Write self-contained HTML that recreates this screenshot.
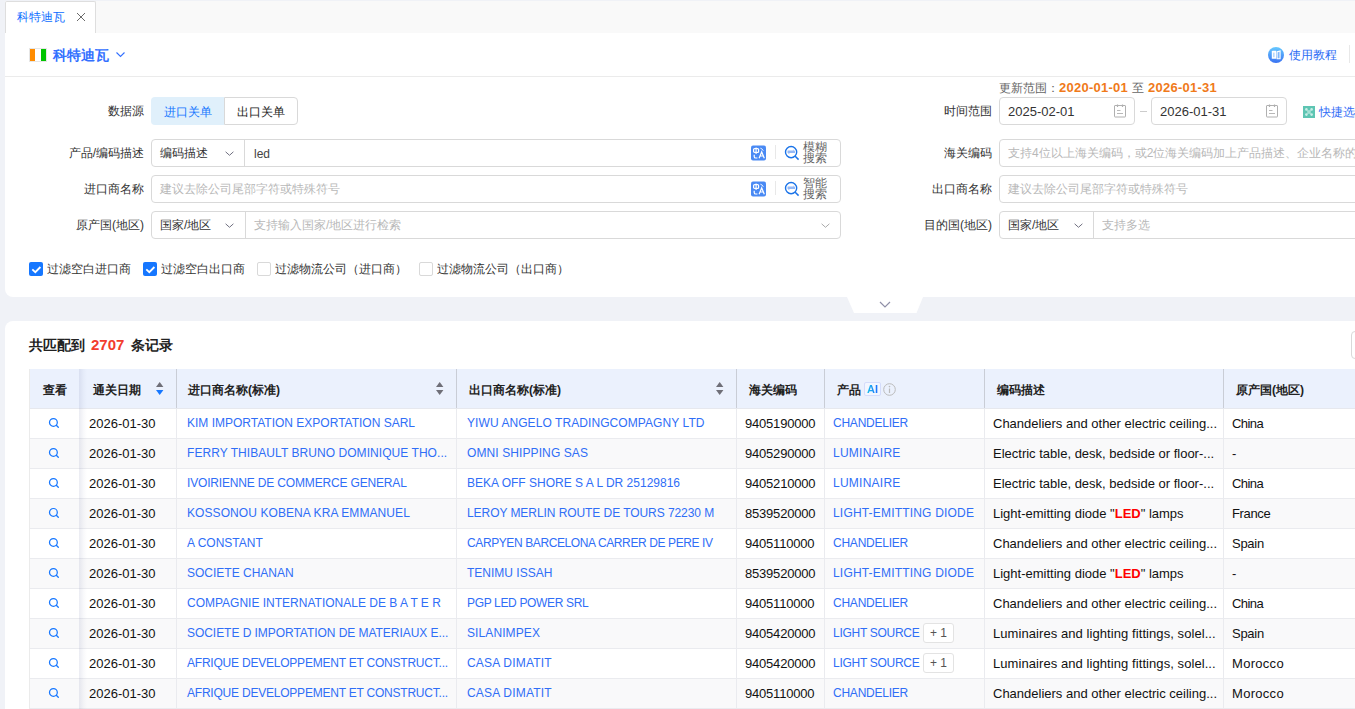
<!DOCTYPE html>
<html><head><meta charset="utf-8">
<style>
*{box-sizing:border-box;margin:0;padding:0}
html,body{width:1355px;height:709px;overflow:hidden}
body{background:#f0f2f7;font-family:"Liberation Sans",sans-serif;font-size:12px;color:#333;position:relative}
.a{position:absolute;white-space:nowrap}
.tabbar{left:5px;top:1px;width:1350px;height:32px;background:#f9f9f9}
.tab{left:5px;top:1px;width:91px;height:32px;background:#fff;border:1px solid #dedede;border-bottom:none;border-radius:2px 2px 0 0}
.p1{left:5px;top:33px;width:1350px;height:264px;background:#fff;border-bottom-left-radius:8px}
.p2{left:5px;top:321px;width:1350px;height:400px;background:#fff;border-top-left-radius:8px}
.lbl{color:#333;font-size:12px;text-align:right;line-height:28px;height:28px;width:120px}
.box{border:1px solid #d9d9d9;border-radius:4px;background:#fff;height:28px}
.ph{color:#b8b8b8;font-size:12px;line-height:16px}
.val{color:#333;font-size:12px;line-height:16px}
.chev{width:6px;height:6px;border-right:1px solid #999;border-bottom:1px solid #999;transform:rotate(45deg)}
.cb{width:14px;height:14px;border-radius:2px;background:#1677ff}
.cb.off{background:#fff;border:1px solid #d9d9d9}

.cbt{font-size:12px;color:#333;line-height:16px}
.th{font-size:12px;font-weight:bold;color:#222;line-height:16px}
.td{font-size:13px;color:#111;line-height:16px}
.lk{color:#2f6ef7;font-size:12px}
</style></head><body>
<div class="a tabbar"></div>
<div class="a tab"></div>
<div class="a" style="left:17px;top:9px;font-size:12px;color:#0a6cff;line-height:16px">科特迪瓦</div>
<svg class="a" style="left:76px;top:12px" width="10" height="10" viewBox="0 0 10 10"><path d="M1 1L9 9M9 1L1 9" stroke="#6a6a6a" stroke-width="1"/></svg>
<div class="a p1"></div>
<div class="a p2"></div>

<!-- header -->
<div class="a" style="left:5px;top:76px;width:1350px;height:1px;background:#ebebeb"></div>
<div class="a" style="left:29px;top:48px;width:18px;height:14px;border:1px solid #e6e6e6;background:linear-gradient(90deg,#ff8c00 0 33%,#fff 33% 66%,#00c400 66%)"></div>
<div class="a" style="left:53px;top:47px;font-size:14px;font-weight:bold;color:#3370ff;line-height:16px">科特迪瓦</div>
<svg class="a" style="left:116px;top:52px" width="9" height="6" viewBox="0 0 9 6"><path d="M0.5 0.5L4.5 4.5L8.5 0.5" stroke="#3370ff" stroke-width="1.1" fill="none"/></svg>
<div class="a" style="left:1268px;top:47px;width:16px;height:16px;border-radius:50%;background:linear-gradient(#66c9ff,#3a72f2)"></div><svg class="a" style="left:1268px;top:47px" width="16" height="16" viewBox="0 0 16 16"><path d="M3.8 4.6Q3.8 3.8 4.6 3.8H8.2V11.7H3.8Z" fill="#fff"/><rect x="5" y="5.6" width="1.6" height="4.6" fill="#b9dafc"/><path d="M9.1 4.9L12.1 4V11.7H9.1Z" stroke="#fff" stroke-width="1.1" fill="#7fb6fa"/></svg>
<div class="a" style="left:1289px;top:47px;font-size:12px;color:#2b6cf5;line-height:16px">使用教程</div>
<div class="a" style="left:1349px;top:45px;width:1px;height:18px;background:#e8e8e8"></div>

<!-- form row 1 -->
<div class="a lbl" style="left:24px;top:97px">数据源</div>
<div class="a" style="left:151px;top:97px;width:73px;height:28px;background:#e0f0fb;border-radius:4px 0 0 4px;color:#1677ff;text-align:center;line-height:28px;padding-top:1px">进口关单</div>
<div class="a" style="left:224px;top:97px;width:74px;height:28px;border:1px solid #d9d9d9;border-radius:0 4px 4px 0;color:#222;text-align:center;line-height:26px;padding-top:1px">出口关单</div>
<div class="a" style="left:999px;top:80px;font-size:12px;line-height:16px;color:#666">更新范围：</div><div class="a" style="left:1059px;top:80px;font-size:13px;font-weight:bold;letter-spacing:0.25px;line-height:16px;color:#f07a1a">2020-01-01</div><div class="a" style="left:1132px;top:80px;font-size:12px;line-height:16px;color:#666">至</div><div class="a" style="left:1148px;top:80px;font-size:13px;font-weight:bold;letter-spacing:0.25px;line-height:16px;color:#f07a1a">2026-01-31</div>
<div class="a lbl" style="left:872px;top:97px">时间范围</div>
<div class="a box" style="left:999px;top:97px;width:136px"></div>
<div class="a val" style="left:1008px;top:104px;font-size:13px">2025-02-01</div>
<div class="a box" style="left:1151px;top:97px;width:136px"></div>
<div class="a val" style="left:1160px;top:104px;font-size:13px">2026-01-31</div>
<div class="a" style="left:1140px;top:111px;width:7px;height:1px;background:#ccc"></div>
<svg class="a" style="left:1114px;top:104px" width="12" height="14" viewBox="0 0 12 14"><rect x="0.5" y="1.5" width="11" height="11.5" rx="0.5" stroke="#b0b0b0" stroke-width="1" fill="none"/><path d="M3.5 0.5V3M8.5 0.5V3" stroke="#b0b0b0" stroke-width="1.2"/><path d="M3 6.5H6.5M3 9.5H9" stroke="#b8b8b8" stroke-width="1"/></svg>
<svg class="a" style="left:1266px;top:104px" width="12" height="14" viewBox="0 0 12 14"><rect x="0.5" y="1.5" width="11" height="11.5" rx="0.5" stroke="#b0b0b0" stroke-width="1" fill="none"/><path d="M3.5 0.5V3M8.5 0.5V3" stroke="#b0b0b0" stroke-width="1.2"/><path d="M3 6.5H6.5M3 9.5H9" stroke="#b8b8b8" stroke-width="1"/></svg>
<svg class="a" style="left:1303px;top:106px" width="12" height="12" viewBox="0 0 12 12"><rect width="12" height="12" fill="#5ec5b3"/><path d="M4.5 4.5L7.5 7.5M7.5 4.5L4.5 7.5" stroke="#c9eee7" stroke-width="1.5"/><circle cx="3.4" cy="3.4" r="1.3" fill="#c9eee7"/><circle cx="8.6" cy="3.4" r="1.3" fill="#c9eee7"/><circle cx="3.4" cy="8.6" r="1.3" fill="#c9eee7"/><circle cx="8.6" cy="8.6" r="1.3" fill="#c9eee7"/><rect x="5" y="5" width="2" height="2" fill="#a5e0d5"/></svg>
<div class="a" style="left:1319px;top:104px;color:#2f6cf6;line-height:16px">快捷选择</div>

<!-- row 2 -->
<div class="a lbl" style="left:24px;top:139px">产品/编码描述</div>
<div class="a box" style="left:151px;top:139px;width:690px"></div>
<div class="a" style="left:244px;top:140px;width:1px;height:26px;background:#d9d9d9"></div>
<div class="a val" style="left:160px;top:145px">编码描述</div>
<svg class="a" style="left:224.5px;top:150.5px" width="9" height="6" viewBox="0 0 9 6"><path d="M0.6 0.8L4.5 4.3L8.4 0.8" stroke="#707080" stroke-width="1" fill="none"/></svg>
<div class="a val" style="left:254px;top:146px;color:#444">led</div>
<svg class="a" style="left:751px;top:145px" width="15" height="16" viewBox="0 0 15 16"><rect y="0.5" width="15" height="15" rx="2" fill="#4a8af4"/><rect x="2.6" y="3.6" width="5" height="3.8" rx="1" stroke="#fff" stroke-width="1.2" fill="none"/><path d="M5.1 2.4V9" stroke="#fff" stroke-width="1.1"/><path d="M3.2 9.8V11.4Q3.2 13 4.8 13H6.4" stroke="#fff" stroke-width="1.2" fill="none"/><path d="M8.1 13.2L10.7 6.9L13.3 13.2M9.1 11H12.3" stroke="#fff" stroke-width="1.2" fill="none"/><path d="M9.4 3.2L11.2 4.1L12.3 5.8" stroke="#fff" stroke-width="1" fill="none" opacity="0.9"/></svg>
<div class="a" style="left:775px;top:145px;width:1px;height:14px;background:#e8e8e8"></div>
<svg class="a" style="left:784px;top:145px" width="16" height="16" viewBox="0 0 16 16"><circle cx="7.1" cy="7.1" r="5.6" stroke="#1a73e8" stroke-width="1.4" fill="none"/><path d="M3.6 5.6H9.6L9.2 4.3L11 6.3V8.1H5.2L5.5 9.6L3.4 7.4Z" fill="#93b8f6"/><path d="M11.2 11.2L14.6 14.6" stroke="#1a73e8" stroke-width="1.5"/></svg>
<div class="a" style="left:803px;top:142px;font-size:12px;line-height:11px;color:#666">模糊<br>搜索</div>
<div class="a lbl" style="left:872px;top:139px">海关编码</div>
<div class="a box" style="left:999px;top:139px;width:400px"></div>
<div class="a ph" style="left:1008px;top:145px">支持4位以上海关编码，或2位海关编码加上产品描述、企业名称的组合</div>

<!-- row 3 -->
<div class="a lbl" style="left:24px;top:175px">进口商名称</div>
<div class="a box" style="left:151px;top:175px;width:690px"></div>
<div class="a ph" style="left:160px;top:181px">建议去除公司尾部字符或特殊符号</div>
<svg class="a" style="left:751px;top:181px" width="15" height="16" viewBox="0 0 15 16"><rect y="0.5" width="15" height="15" rx="2" fill="#4a8af4"/><rect x="2.6" y="3.6" width="5" height="3.8" rx="1" stroke="#fff" stroke-width="1.2" fill="none"/><path d="M5.1 2.4V9" stroke="#fff" stroke-width="1.1"/><path d="M3.2 9.8V11.4Q3.2 13 4.8 13H6.4" stroke="#fff" stroke-width="1.2" fill="none"/><path d="M8.1 13.2L10.7 6.9L13.3 13.2M9.1 11H12.3" stroke="#fff" stroke-width="1.2" fill="none"/><path d="M9.4 3.2L11.2 4.1L12.3 5.8" stroke="#fff" stroke-width="1" fill="none" opacity="0.9"/></svg>
<div class="a" style="left:775px;top:181px;width:1px;height:14px;background:#e8e8e8"></div>
<svg class="a" style="left:784px;top:181px" width="16" height="16" viewBox="0 0 16 16"><circle cx="7.1" cy="7.1" r="5.6" stroke="#1a73e8" stroke-width="1.4" fill="none"/><path d="M3.6 5.6H9.6L9.2 4.3L11 6.3V8.1H5.2L5.5 9.6L3.4 7.4Z" fill="#93b8f6"/><path d="M11.2 11.2L14.6 14.6" stroke="#1a73e8" stroke-width="1.5"/></svg>
<div class="a" style="left:803px;top:178px;font-size:12px;line-height:11px;color:#666">智能<br>搜索</div>
<div class="a lbl" style="left:872px;top:175px">出口商名称</div>
<div class="a box" style="left:999px;top:175px;width:400px"></div>
<div class="a ph" style="left:1008px;top:181px">建议去除公司尾部字符或特殊符号</div>

<!-- row 4 -->
<div class="a lbl" style="left:24px;top:211px">原产国(地区)</div>
<div class="a box" style="left:151px;top:211px;width:690px"></div>
<div class="a" style="left:245px;top:212px;width:1px;height:26px;background:#d9d9d9"></div>
<div class="a val" style="left:160px;top:217px">国家/地区</div>
<svg class="a" style="left:224.5px;top:222.5px" width="9" height="6" viewBox="0 0 9 6"><path d="M0.6 0.8L4.5 4.3L8.4 0.8" stroke="#707080" stroke-width="1" fill="none"/></svg>
<div class="a ph" style="left:254px;top:217px">支持输入国家/地区进行检索</div>
<svg class="a" style="left:820.5px;top:222.5px" width="9" height="6" viewBox="0 0 9 6"><path d="M0.6 0.8L4.5 4.3L8.4 0.8" stroke="#aaa" stroke-width="1" fill="none"/></svg>
<div class="a lbl" style="left:872px;top:211px">目的国(地区)</div>
<div class="a box" style="left:999px;top:211px;width:400px"></div>
<div class="a" style="left:1093px;top:212px;width:1px;height:26px;background:#d9d9d9"></div>
<div class="a val" style="left:1008px;top:217px">国家/地区</div>
<svg class="a" style="left:1073.5px;top:222.5px" width="9" height="6" viewBox="0 0 9 6"><path d="M0.6 0.8L4.5 4.3L8.4 0.8" stroke="#707080" stroke-width="1" fill="none"/></svg>
<div class="a ph" style="left:1102px;top:217px">支持多选</div>

<!-- checkboxes -->
<div class="a cb" style="left:29px;top:262px"><svg width="14" height="14" viewBox="0 0 14 14" style="position:absolute;left:0;top:0"><path d="M3.3 7.3L6.3 10.2L11.4 5" stroke="#fff" stroke-width="1.8" fill="none"/></svg></div><div class="a cbt" style="left:47px;top:261px">过滤空白进口商</div>
<div class="a cb" style="left:143px;top:262px"><svg width="14" height="14" viewBox="0 0 14 14" style="position:absolute;left:0;top:0"><path d="M3.3 7.3L6.3 10.2L11.4 5" stroke="#fff" stroke-width="1.8" fill="none"/></svg></div><div class="a cbt" style="left:161px;top:261px">过滤空白出口商</div>
<div class="a cb off" style="left:257px;top:262px"></div><div class="a cbt" style="left:275px;top:261px">过滤物流公司（进口商）</div>
<div class="a cb off" style="left:419px;top:262px"></div><div class="a cbt" style="left:437px;top:261px">过滤物流公司（出口商）</div>

<!-- collapse -->
<svg class="a" style="left:847px;top:297px" width="76" height="16" viewBox="0 0 76 16"><path d="M0 0H76L69.5 16H7Z" fill="#fff"/><path d="M33 5L38 10L43 5" stroke="#9090a8" stroke-width="1.2" fill="none"/></svg>

<!-- panel 2 -->
<div class="a" style="left:29px;top:336px;font-size:14px;font-weight:bold;color:#222;line-height:18px">共匹配到</div><div class="a" style="left:91px;top:336px;font-size:15px;font-weight:bold;color:#f23d2d;line-height:18px">2707</div><div class="a" style="left:131px;top:336px;font-size:14px;font-weight:bold;color:#222;line-height:18px">条记录</div>
<div class="a" style="left:1351px;top:331px;width:30px;height:28px;border:1px solid #d9d9d9;border-radius:4px"></div>
<div class="a" style="left:29px;top:369px;width:1330px;height:40px;background:#ebf1fd;border-bottom:1px solid #e6e8ee"></div>
<div class="a" style="left:176px;top:369px;width:1px;height:39px;background:#c9cdd6"></div>
<div class="a" style="left:456px;top:369px;width:1px;height:39px;background:#c9cdd6"></div>
<div class="a" style="left:736px;top:369px;width:1px;height:39px;background:#c9cdd6"></div>
<div class="a" style="left:824px;top:369px;width:1px;height:39px;background:#c9cdd6"></div>
<div class="a" style="left:984px;top:369px;width:1px;height:39px;background:#c9cdd6"></div>
<div class="a" style="left:1223px;top:369px;width:1px;height:39px;background:#c9cdd6"></div>
<div class="a th" style="left:30px;width:50px;text-align:center;top:382px">查看</div>
<div class="a th" style="left:93px;top:382px">通关日期</div>
<div class="a th" style="left:188px;top:382px">进口商名称(标准)</div>
<div class="a th" style="left:469px;top:382px">出口商名称(标准)</div>
<div class="a th" style="left:749px;top:382px">海关编码</div>
<div class="a th" style="left:837px;top:382px">产品</div>
<div class="a th" style="left:997px;top:382px">编码描述</div>
<div class="a th" style="left:1236px;top:382px">原产国(地区)</div>
<svg class="a" style="left:156px;top:381px" width="8" height="15" viewBox="0 0 8 15"><path d="M0 5.9L3.7 0.9L7.4 5.9Z" fill="#6f6f78"/><path d="M0 9L3.7 14L7.4 9Z" fill="#1677ff"/></svg>
<svg class="a" style="left:436px;top:381px" width="8" height="15" viewBox="0 0 8 15"><path d="M0 5.9L3.7 0.9L7.4 5.9Z" fill="#6f6f78"/><path d="M0 9L3.7 14L7.4 9Z" fill="#6f6f78"/></svg>
<svg class="a" style="left:716px;top:381px" width="8" height="15" viewBox="0 0 8 15"><path d="M0 5.9L3.7 0.9L7.4 5.9Z" fill="#6f6f78"/><path d="M0 9L3.7 14L7.4 9Z" fill="#6f6f78"/></svg>
<div class="a" style="left:864px;top:382px;width:17px;height:14px;border:1px solid #d4dcfb;border-radius:2px;background:#f2f6ff"></div>
<div class="a" style="left:867px;top:383px;font-size:11px;font-weight:bold;line-height:12px;background:linear-gradient(90deg,#1ec0e8,#1a6cff);-webkit-background-clip:text;background-clip:text;color:transparent">AI</div>
<svg class="a" style="left:883px;top:383px" width="13" height="13" viewBox="0 0 13 13"><circle cx="6.5" cy="6.5" r="5.8" stroke="#bbb" stroke-width="1" fill="none"/><path d="M6.5 5.5V10" stroke="#bbb" stroke-width="1.2"/><circle cx="6.5" cy="3.6" r="0.8" fill="#bbb"/></svg>
<div class="a" style="left:29px;top:409px;width:1330px;height:30px;background:#fff;border-bottom:1px solid #eaebef"></div>
<div class="a" style="left:176px;top:409px;width:1px;height:30px;background:#eaebef"></div>
<div class="a" style="left:456px;top:409px;width:1px;height:30px;background:#eaebef"></div>
<div class="a" style="left:736px;top:409px;width:1px;height:30px;background:#eaebef"></div>
<div class="a" style="left:824px;top:409px;width:1px;height:30px;background:#eaebef"></div>
<div class="a" style="left:984px;top:409px;width:1px;height:30px;background:#eaebef"></div>
<div class="a" style="left:1223px;top:409px;width:1px;height:30px;background:#eaebef"></div>
<svg class="a" style="left:48px;top:417px" width="12" height="12" viewBox="0 0 12 12"><circle cx="5.4" cy="5.4" r="3.9" stroke="#1677ff" stroke-width="1.25" fill="none"/><path d="M8.3 8.3L10.3 10.3" stroke="#1677ff" stroke-width="1.3" stroke-linecap="round"/></svg>
<div class="a td" style="left:89px;top:416px">2026-01-30</div>
<div class="a td lk" style="left:187px;top:415px">KIM IMPORTATION EXPORTATION SARL</div>
<div class="a td lk" style="left:467px;top:415px;letter-spacing:0.077px">YIWU ANGELO TRADINGCOMPAGNY LTD</div>
<div class="a td" style="left:745px;top:416px;letter-spacing:-0.2px">9405190000</div>
<div class="a td lk" style="left:833px;top:415px;letter-spacing:-0.233px">CHANDELIER</div>
<div class="a td" style="left:993px;top:416px">Chandeliers and other electric ceiling...</div>
<div class="a td" style="left:1232px;top:416px;letter-spacing:-0.575px">China</div>
<div class="a" style="left:29px;top:439px;width:1330px;height:30px;background:#f9f9fa;border-bottom:1px solid #eaebef"></div>
<div class="a" style="left:176px;top:439px;width:1px;height:30px;background:#eaebef"></div>
<div class="a" style="left:456px;top:439px;width:1px;height:30px;background:#eaebef"></div>
<div class="a" style="left:736px;top:439px;width:1px;height:30px;background:#eaebef"></div>
<div class="a" style="left:824px;top:439px;width:1px;height:30px;background:#eaebef"></div>
<div class="a" style="left:984px;top:439px;width:1px;height:30px;background:#eaebef"></div>
<div class="a" style="left:1223px;top:439px;width:1px;height:30px;background:#eaebef"></div>
<svg class="a" style="left:48px;top:447px" width="12" height="12" viewBox="0 0 12 12"><circle cx="5.4" cy="5.4" r="3.9" stroke="#1677ff" stroke-width="1.25" fill="none"/><path d="M8.3 8.3L10.3 10.3" stroke="#1677ff" stroke-width="1.3" stroke-linecap="round"/></svg>
<div class="a td" style="left:89px;top:446px">2026-01-30</div>
<div class="a td lk" style="left:187px;top:445px;letter-spacing:0.058px">FERRY THIBAULT BRUNO DOMINIQUE THO...</div>
<div class="a td lk" style="left:467px;top:445px;letter-spacing:0.1px">OMNI SHIPPING SAS</div>
<div class="a td" style="left:745px;top:446px;letter-spacing:-0.2px">9405290000</div>
<div class="a td lk" style="left:833px;top:445px;letter-spacing:0.25px">LUMINAIRE</div>
<div class="a td" style="left:993px;top:446px">Electric table, desk, bedside or floor-...</div>
<div class="a td" style="left:1232px;top:446px">-</div>
<div class="a" style="left:29px;top:469px;width:1330px;height:30px;background:#fff;border-bottom:1px solid #eaebef"></div>
<div class="a" style="left:176px;top:469px;width:1px;height:30px;background:#eaebef"></div>
<div class="a" style="left:456px;top:469px;width:1px;height:30px;background:#eaebef"></div>
<div class="a" style="left:736px;top:469px;width:1px;height:30px;background:#eaebef"></div>
<div class="a" style="left:824px;top:469px;width:1px;height:30px;background:#eaebef"></div>
<div class="a" style="left:984px;top:469px;width:1px;height:30px;background:#eaebef"></div>
<div class="a" style="left:1223px;top:469px;width:1px;height:30px;background:#eaebef"></div>
<svg class="a" style="left:48px;top:477px" width="12" height="12" viewBox="0 0 12 12"><circle cx="5.4" cy="5.4" r="3.9" stroke="#1677ff" stroke-width="1.25" fill="none"/><path d="M8.3 8.3L10.3 10.3" stroke="#1677ff" stroke-width="1.3" stroke-linecap="round"/></svg>
<div class="a td" style="left:89px;top:476px">2026-01-30</div>
<div class="a td lk" style="left:187px;top:475px;letter-spacing:-0.169px">IVOIRIENNE DE COMMERCE GENERAL</div>
<div class="a td lk" style="left:467px;top:475px">BEKA OFF SHORE S A L DR 25129816</div>
<div class="a td" style="left:745px;top:476px;letter-spacing:-0.2px">9405210000</div>
<div class="a td lk" style="left:833px;top:475px;letter-spacing:0.25px">LUMINAIRE</div>
<div class="a td" style="left:993px;top:476px">Electric table, desk, bedside or floor-...</div>
<div class="a td" style="left:1232px;top:476px;letter-spacing:-0.575px">China</div>
<div class="a" style="left:29px;top:499px;width:1330px;height:30px;background:#f9f9fa;border-bottom:1px solid #eaebef"></div>
<div class="a" style="left:176px;top:499px;width:1px;height:30px;background:#eaebef"></div>
<div class="a" style="left:456px;top:499px;width:1px;height:30px;background:#eaebef"></div>
<div class="a" style="left:736px;top:499px;width:1px;height:30px;background:#eaebef"></div>
<div class="a" style="left:824px;top:499px;width:1px;height:30px;background:#eaebef"></div>
<div class="a" style="left:984px;top:499px;width:1px;height:30px;background:#eaebef"></div>
<div class="a" style="left:1223px;top:499px;width:1px;height:30px;background:#eaebef"></div>
<svg class="a" style="left:48px;top:507px" width="12" height="12" viewBox="0 0 12 12"><circle cx="5.4" cy="5.4" r="3.9" stroke="#1677ff" stroke-width="1.25" fill="none"/><path d="M8.3 8.3L10.3 10.3" stroke="#1677ff" stroke-width="1.3" stroke-linecap="round"/></svg>
<div class="a td" style="left:89px;top:506px">2026-01-30</div>
<div class="a td lk" style="left:187px;top:505px;letter-spacing:0.078px">KOSSONOU KOBENA KRA EMMANUEL</div>
<div class="a td lk" style="left:467px;top:505px;letter-spacing:-0.065px">LEROY MERLIN ROUTE DE TOURS 72230 M</div>
<div class="a td" style="left:745px;top:506px;letter-spacing:-0.2px">8539520000</div>
<div class="a td lk" style="left:833px;top:505px;letter-spacing:0.189px">LIGHT-EMITTING DIODE</div>
<div class="a td" style="left:993px;top:506px">Light-emitting diode "<b style="color:#f00">LED</b>" lamps</div>
<div class="a td" style="left:1232px;top:506px;letter-spacing:-0.36px">France</div>
<div class="a" style="left:29px;top:529px;width:1330px;height:30px;background:#fff;border-bottom:1px solid #eaebef"></div>
<div class="a" style="left:176px;top:529px;width:1px;height:30px;background:#eaebef"></div>
<div class="a" style="left:456px;top:529px;width:1px;height:30px;background:#eaebef"></div>
<div class="a" style="left:736px;top:529px;width:1px;height:30px;background:#eaebef"></div>
<div class="a" style="left:824px;top:529px;width:1px;height:30px;background:#eaebef"></div>
<div class="a" style="left:984px;top:529px;width:1px;height:30px;background:#eaebef"></div>
<div class="a" style="left:1223px;top:529px;width:1px;height:30px;background:#eaebef"></div>
<svg class="a" style="left:48px;top:537px" width="12" height="12" viewBox="0 0 12 12"><circle cx="5.4" cy="5.4" r="3.9" stroke="#1677ff" stroke-width="1.25" fill="none"/><path d="M8.3 8.3L10.3 10.3" stroke="#1677ff" stroke-width="1.3" stroke-linecap="round"/></svg>
<div class="a td" style="left:89px;top:536px">2026-01-30</div>
<div class="a td lk" style="left:187px;top:535px">A CONSTANT</div>
<div class="a td lk" style="left:467px;top:535px;letter-spacing:-0.394px">CARPYEN BARCELONA CARRER DE PERE IV</div>
<div class="a td" style="left:745px;top:536px;letter-spacing:-0.2px">9405110000</div>
<div class="a td lk" style="left:833px;top:535px;letter-spacing:-0.233px">CHANDELIER</div>
<div class="a td" style="left:993px;top:536px">Chandeliers and other electric ceiling...</div>
<div class="a td" style="left:1232px;top:536px;letter-spacing:-0.275px">Spain</div>
<div class="a" style="left:29px;top:559px;width:1330px;height:30px;background:#f9f9fa;border-bottom:1px solid #eaebef"></div>
<div class="a" style="left:176px;top:559px;width:1px;height:30px;background:#eaebef"></div>
<div class="a" style="left:456px;top:559px;width:1px;height:30px;background:#eaebef"></div>
<div class="a" style="left:736px;top:559px;width:1px;height:30px;background:#eaebef"></div>
<div class="a" style="left:824px;top:559px;width:1px;height:30px;background:#eaebef"></div>
<div class="a" style="left:984px;top:559px;width:1px;height:30px;background:#eaebef"></div>
<div class="a" style="left:1223px;top:559px;width:1px;height:30px;background:#eaebef"></div>
<svg class="a" style="left:48px;top:567px" width="12" height="12" viewBox="0 0 12 12"><circle cx="5.4" cy="5.4" r="3.9" stroke="#1677ff" stroke-width="1.25" fill="none"/><path d="M8.3 8.3L10.3 10.3" stroke="#1677ff" stroke-width="1.3" stroke-linecap="round"/></svg>
<div class="a td" style="left:89px;top:566px">2026-01-30</div>
<div class="a td lk" style="left:187px;top:565px">SOCIETE CHANAN</div>
<div class="a td lk" style="left:467px;top:565px">TENIMU ISSAH</div>
<div class="a td" style="left:745px;top:566px;letter-spacing:-0.2px">8539520000</div>
<div class="a td lk" style="left:833px;top:565px;letter-spacing:0.189px">LIGHT-EMITTING DIODE</div>
<div class="a td" style="left:993px;top:566px">Light-emitting diode "<b style="color:#f00">LED</b>" lamps</div>
<div class="a td" style="left:1232px;top:566px">-</div>
<div class="a" style="left:29px;top:589px;width:1330px;height:30px;background:#fff;border-bottom:1px solid #eaebef"></div>
<div class="a" style="left:176px;top:589px;width:1px;height:30px;background:#eaebef"></div>
<div class="a" style="left:456px;top:589px;width:1px;height:30px;background:#eaebef"></div>
<div class="a" style="left:736px;top:589px;width:1px;height:30px;background:#eaebef"></div>
<div class="a" style="left:824px;top:589px;width:1px;height:30px;background:#eaebef"></div>
<div class="a" style="left:984px;top:589px;width:1px;height:30px;background:#eaebef"></div>
<div class="a" style="left:1223px;top:589px;width:1px;height:30px;background:#eaebef"></div>
<svg class="a" style="left:48px;top:597px" width="12" height="12" viewBox="0 0 12 12"><circle cx="5.4" cy="5.4" r="3.9" stroke="#1677ff" stroke-width="1.25" fill="none"/><path d="M8.3 8.3L10.3 10.3" stroke="#1677ff" stroke-width="1.3" stroke-linecap="round"/></svg>
<div class="a td" style="left:89px;top:596px">2026-01-30</div>
<div class="a td lk" style="left:187px;top:595px">COMPAGNIE INTERNATIONALE DE B A T E R</div>
<div class="a td lk" style="left:467px;top:595px;letter-spacing:-0.338px">PGP LED POWER SRL</div>
<div class="a td" style="left:745px;top:596px;letter-spacing:-0.2px">9405110000</div>
<div class="a td lk" style="left:833px;top:595px;letter-spacing:-0.233px">CHANDELIER</div>
<div class="a td" style="left:993px;top:596px">Chandeliers and other electric ceiling...</div>
<div class="a td" style="left:1232px;top:596px;letter-spacing:-0.575px">China</div>
<div class="a" style="left:29px;top:619px;width:1330px;height:30px;background:#f9f9fa;border-bottom:1px solid #eaebef"></div>
<div class="a" style="left:176px;top:619px;width:1px;height:30px;background:#eaebef"></div>
<div class="a" style="left:456px;top:619px;width:1px;height:30px;background:#eaebef"></div>
<div class="a" style="left:736px;top:619px;width:1px;height:30px;background:#eaebef"></div>
<div class="a" style="left:824px;top:619px;width:1px;height:30px;background:#eaebef"></div>
<div class="a" style="left:984px;top:619px;width:1px;height:30px;background:#eaebef"></div>
<div class="a" style="left:1223px;top:619px;width:1px;height:30px;background:#eaebef"></div>
<svg class="a" style="left:48px;top:627px" width="12" height="12" viewBox="0 0 12 12"><circle cx="5.4" cy="5.4" r="3.9" stroke="#1677ff" stroke-width="1.25" fill="none"/><path d="M8.3 8.3L10.3 10.3" stroke="#1677ff" stroke-width="1.3" stroke-linecap="round"/></svg>
<div class="a td" style="left:89px;top:626px">2026-01-30</div>
<div class="a td lk" style="left:187px;top:625px;letter-spacing:-0.045px">SOCIETE D IMPORTATION DE MATERIAUX E...</div>
<div class="a td lk" style="left:467px;top:625px;letter-spacing:0.1px">SILANIMPEX</div>
<div class="a td" style="left:745px;top:626px;letter-spacing:-0.2px">9405420000</div>
<div class="a td lk" style="left:833px;top:625px;letter-spacing:-0.282px">LIGHT SOURCE</div>
<div class="a" style="left:923px;top:623px;width:31px;height:20px;border:1px solid #e3e3e3;border-radius:3px;background:#fff;color:#555;font-size:12px;line-height:19px;text-align:center">+ 1</div>
<div class="a td" style="left:993px;top:626px;letter-spacing:0.073px">Luminaires and lighting fittings, solel...</div>
<div class="a td" style="left:1232px;top:626px;letter-spacing:-0.275px">Spain</div>
<div class="a" style="left:29px;top:649px;width:1330px;height:30px;background:#fff;border-bottom:1px solid #eaebef"></div>
<div class="a" style="left:176px;top:649px;width:1px;height:30px;background:#eaebef"></div>
<div class="a" style="left:456px;top:649px;width:1px;height:30px;background:#eaebef"></div>
<div class="a" style="left:736px;top:649px;width:1px;height:30px;background:#eaebef"></div>
<div class="a" style="left:824px;top:649px;width:1px;height:30px;background:#eaebef"></div>
<div class="a" style="left:984px;top:649px;width:1px;height:30px;background:#eaebef"></div>
<div class="a" style="left:1223px;top:649px;width:1px;height:30px;background:#eaebef"></div>
<svg class="a" style="left:48px;top:657px" width="12" height="12" viewBox="0 0 12 12"><circle cx="5.4" cy="5.4" r="3.9" stroke="#1677ff" stroke-width="1.25" fill="none"/><path d="M8.3 8.3L10.3 10.3" stroke="#1677ff" stroke-width="1.3" stroke-linecap="round"/></svg>
<div class="a td" style="left:89px;top:656px">2026-01-30</div>
<div class="a td lk" style="left:187px;top:655px;letter-spacing:-0.217px">AFRIQUE DEVELOPPEMENT ET CONSTRUCT...</div>
<div class="a td lk" style="left:467px;top:655px;letter-spacing:0.2px">CASA DIMATIT</div>
<div class="a td" style="left:745px;top:656px;letter-spacing:-0.2px">9405420000</div>
<div class="a td lk" style="left:833px;top:655px;letter-spacing:-0.282px">LIGHT SOURCE</div>
<div class="a" style="left:923px;top:653px;width:31px;height:20px;border:1px solid #e3e3e3;border-radius:3px;background:#fff;color:#555;font-size:12px;line-height:19px;text-align:center">+ 1</div>
<div class="a td" style="left:993px;top:656px;letter-spacing:0.073px">Luminaires and lighting fittings, solel...</div>
<div class="a td" style="left:1232px;top:656px;letter-spacing:0.3px">Morocco</div>
<div class="a" style="left:29px;top:679px;width:1330px;height:30px;background:#f9f9fa;border-bottom:1px solid #eaebef"></div>
<div class="a" style="left:176px;top:679px;width:1px;height:30px;background:#eaebef"></div>
<div class="a" style="left:456px;top:679px;width:1px;height:30px;background:#eaebef"></div>
<div class="a" style="left:736px;top:679px;width:1px;height:30px;background:#eaebef"></div>
<div class="a" style="left:824px;top:679px;width:1px;height:30px;background:#eaebef"></div>
<div class="a" style="left:984px;top:679px;width:1px;height:30px;background:#eaebef"></div>
<div class="a" style="left:1223px;top:679px;width:1px;height:30px;background:#eaebef"></div>
<svg class="a" style="left:48px;top:687px" width="12" height="12" viewBox="0 0 12 12"><circle cx="5.4" cy="5.4" r="3.9" stroke="#1677ff" stroke-width="1.25" fill="none"/><path d="M8.3 8.3L10.3 10.3" stroke="#1677ff" stroke-width="1.3" stroke-linecap="round"/></svg>
<div class="a td" style="left:89px;top:686px">2026-01-30</div>
<div class="a td lk" style="left:187px;top:685px;letter-spacing:-0.217px">AFRIQUE DEVELOPPEMENT ET CONSTRUCT...</div>
<div class="a td lk" style="left:467px;top:685px;letter-spacing:0.2px">CASA DIMATIT</div>
<div class="a td" style="left:745px;top:686px;letter-spacing:-0.2px">9405110000</div>
<div class="a td lk" style="left:833px;top:685px;letter-spacing:-0.233px">CHANDELIER</div>
<div class="a td" style="left:993px;top:686px">Chandeliers and other electric ceiling...</div>
<div class="a td" style="left:1232px;top:686px;letter-spacing:0.3px">Morocco</div>
<div class="a" style="left:79px;top:369px;width:8px;height:340px;background:linear-gradient(90deg,rgba(70,80,140,0.11),rgba(70,80,140,0.03) 60%,rgba(70,80,140,0))"></div>
<div class="a" style="left:29px;top:369px;width:1px;height:340px;background:#ebebeb"></div>
</body></html>
